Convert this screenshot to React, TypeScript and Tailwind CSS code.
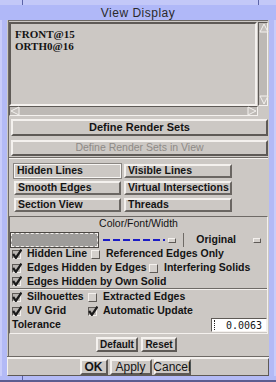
import React from 'react';

const raised = 'border border-t-[#f4f1ee] border-l-[#f4f1ee] border-b-[#5e5a56] border-r-[#5e5a56]';
const sunken = 'border border-t-[#5e5a56] border-l-[#5e5a56] border-b-[#f4f1ee] border-r-[#f4f1ee]';

function CheckBox({ checked }: { checked: boolean }) {
  return (
    <span
      className={`relative inline-block h-[9px] w-[9px] shrink-0 ${
        checked ? `${sunken} bg-[#b8b4b0]` : `${raised} bg-[#d4d0cc]`
      }`}
    >
      {checked && (
        <svg viewBox="0 0 9 9" className="absolute left-[-1px] top-[-2px] h-[10px] w-[10px]">
          <path d="M1 4.5 L3.5 8 L8.5 0.5" stroke="#1a1a1a" strokeWidth="2" fill="none" />
        </svg>
      )}
    </span>
  );
}

function CheckRow({ items, h = 14 }: { items: [string, boolean, number?][]; h?: number }) {
  return (
    <div className="flex items-center" style={{ height: h }}>
      {items.map(([label, checked, width]) => (
        <div key={label} className="flex shrink-0 items-center gap-[6px]" style={width ? { width } : undefined}>
          <CheckBox checked={checked} />
          <span className="whitespace-nowrap">{label}</span>
        </div>
      ))}
    </div>
  );
}

function Toggle({ label, on }: { label: string; on?: boolean }) {
  return (
    <div
      className={`flex h-[14px] items-center whitespace-nowrap px-[2px] ${
        on
          ? 'border border-[#f8f6f4] outline outline-1 outline-[#8a8682]'
          : 'border-2 border-t-[#f4f1ee] border-l-[#f4f1ee] border-b-[#6a6662] border-r-[#6a6662]'
      }`}
    >
      {label}
    </div>
  );
}

function Arrow({ dir }: { dir: 'up' | 'down' | 'left' | 'right' }) {
  const pts = {
    up: '5,1 9,9 1,9',
    down: '1,1 9,1 5,9',
    left: '1,5 9,1 9,9',
    right: '1,1 9,5 1,9',
  }[dir];
  return (
    <svg viewBox="0 0 10 10" className="h-[10px] w-[10px] shrink-0">
      <polygon points={pts} fill="#c4c0bc" stroke="#f4f1ee" strokeWidth="1" />
    </svg>
  );
}

export default function App() {
  return (
    <div
      className="flex h-[382px] w-[276px] flex-col overflow-hidden bg-[#b3baf6] text-[11px] font-bold text-[#141414]"
      style={{ fontFamily: '"Liberation Sans", Arial, sans-serif' }}
    >
      {/* window frame top */}
      <div className="flex h-[5px] shrink-0 bg-[#c3c8f8]">
        <div className="w-[22px]" />
        <div className="w-px bg-[#5c64a8]" />
        <div className="flex-1" />
        <div className="w-px bg-[#5c64a8]" />
        <div className="w-[17px]" />
      </div>
      {/* title */}
      <div className="flex h-[15px] shrink-0 items-center justify-center bg-[#b0b8f8] text-[12px] font-normal tracking-[0.5px] text-[#2a2a2a]">
        View Display
      </div>

      <div className="flex h-[356px] shrink-0">
        <div className="w-[7px] border-l-2 border-[#c8ccfa]" />
        <div className="flex w-[262px] flex-col bg-[#ccc8c4]">
          <div className="ml-[1px] mr-[1px] flex flex-col border-l border-t border-[#6e6a66] pt-[1px]">
            {/* list */}
            <div className="flex h-[84px]">
              <div className={`w-[249px] ${sunken} border-2 pl-[4px] pt-[4px] leading-[12px]`}>
                <div style={{ fontFamily: '"Liberation Serif", serif' }} className="text-[11px] font-bold">
                  FRONT@15
                </div>
                <div style={{ fontFamily: '"Liberation Serif", serif' }} className="text-[11px] font-bold">
                  ORTH0@16
                </div>
              </div>
              <div className={`ml-px flex w-[10px] flex-col justify-between ${sunken} bg-[#bdb9b5]`}>
                <Arrow dir="up" />
                <Arrow dir="down" />
              </div>
            </div>
            <div className="flex h-[10px]">
              <div className={`flex w-[249px] items-center justify-between ${sunken} bg-[#bdb9b5]`}>
                <Arrow dir="left" />
                <Arrow dir="right" />
              </div>
            </div>

            <div className={`ml-[2px] mt-[3px] flex h-[17px] items-center justify-center ${raised} border-2 text-[11px]`}>
              Define Render Sets
            </div>
            <div className={`ml-[2px] mt-[4px] flex h-[16px] items-center justify-center ${raised} border-2 text-[10.5px] font-normal text-[#8e8a86]`}>
              Define Render Sets in View
            </div>
            <div className="mt-px h-px bg-[#6e6a66]" />
            <div className="h-px bg-[#f4f1ee]" />

            {/* toggles */}
            <div className="ml-[5px] mt-[5px] grid w-[218px] grid-cols-[107px_108px] gap-[3px] text-[10.5px]">
              <Toggle label="Hidden Lines" on />
              <Toggle label="Visible Lines" />
              <Toggle label="Smooth Edges" />
              <Toggle label="Virtual Intersections" />
              <Toggle label="Section View" />
              <Toggle label="Threads" />
            </div>

            {/* color/font/width frame */}
            <div className="mt-[4px] flex flex-col border border-b-[#f4f1ee] border-l-[#6e6a66] border-r-[#f4f1ee] border-t-[#6e6a66]">
              <div className="flex h-[13px] items-center justify-center text-[10.5px] font-normal">Color/Font/Width</div>
              <div className="mt-[3px] flex h-[14px] items-center">
                <div className="ml-px h-[14px] w-[87px] border border-dashed border-[#f4f1ee] bg-[#9e9c9a] outline outline-1 outline-[#4a4642]" />
                <svg className="ml-[5px] h-[4px] w-[62px]" viewBox="0 0 62 4">
                  <line x1="0" y1="2" x2="62" y2="2" stroke="#1c1cc4" strokeWidth="2" strokeDasharray="7 3" />
                </svg>
                <div className={`ml-[3px] h-[5px] w-[8px] ${raised} bg-[#d4d0cc]`} />
                <div className="ml-[7px] h-[14px] w-px bg-[#6e6a66]" />
                <div className="flex flex-1 items-center justify-end pr-[6px] text-[10.5px]">
                  <span className="mr-[17px]">Original</span>
                  <div className={`h-[5px] w-[8px] ${raised} bg-[#d4d0cc]`} />
                </div>
              </div>
              <div className="ml-[2px] flex flex-col text-[10.5px]">
                <CheckRow items={[['Hidden Line', true, 79], ['Referenced Edges Only', false]]} />
                <CheckRow items={[['Edges Hidden by Edges', true, 137], ['Interfering Solids', false]]} />
                <CheckRow items={[['Edges Hidden by Own Solid', true]]} h={13} />
              </div>
              <div className="h-px bg-[#6e6a66]" />
              <div className="h-px bg-[#f4f1ee]" />
              <div className="ml-[2px] flex flex-col text-[10.5px]">
                <CheckRow items={[['Silhouettes', true, 76], ['Extracted Edges', false]]} />
                <CheckRow items={[['UV Grid', true, 76], ['Automatic Update', true]]} />
                <div className="flex h-[14px] items-center justify-between">
                  <span className="text-[10.5px]">Tolerance</span>
                  <div
                    className={`flex h-[14px] w-[56px] items-center justify-between ${sunken} bg-white pl-[2px] pr-[4px] font-normal`}
                    style={{ fontFamily: '"DejaVu Sans Mono", monospace' }}
                  >
                    <span className="h-[10px] border-l border-dotted border-[#222]" />
                    <span className="text-[10px]">0.0063</span>
                  </div>
                </div>
              </div>
              <div className="h-[1px]" />
            </div>

            <div className="flex h-[21px] items-center justify-center gap-[3px] pr-[4px]">
              <div className={`flex h-[15px] w-[42px] items-center justify-center ${raised} border-2 text-[10px]`}>
                Default
              </div>
              <div className={`flex h-[15px] w-[36px] items-center justify-center ${raised} border-2 text-[10px]`}>
                Reset
              </div>
            </div>
            <div className="h-[1px]" />
          </div>
          <div className="h-px bg-[#6e6a66]" />
          <div className="h-px bg-[#f4f1ee]" />
          <div className={`flex flex-1 items-center justify-center gap-[2px] pr-[6px] ${raised}`}>
            <div className={`flex h-[16px] w-[28px] items-center justify-center ${raised} border-2 text-[12px]`}>OK</div>
            <div className={`flex h-[16px] w-[42px] items-center justify-center ${raised} border-2 text-[12px] font-normal`}>
              Apply
            </div>
            <div className={`flex h-[16px] w-[37px] items-center justify-center ${raised} border-2 text-[12px] font-normal`}>
              Cancel
            </div>
          </div>
        </div>
        <div className="flex-1 border-r-2 border-[#c8ccfa]" />
      </div>
      <div className="flex h-[6px] shrink-0 flex-col">
        <div className="flex flex-1">
          <div className="w-[22px]" />
          <div className="w-px bg-[#5c64a8]" />
          <div className="flex-1" />
        </div>
        <div className="h-[2px] bg-[#5c5c90]" />
      </div>
    </div>
  );
}
